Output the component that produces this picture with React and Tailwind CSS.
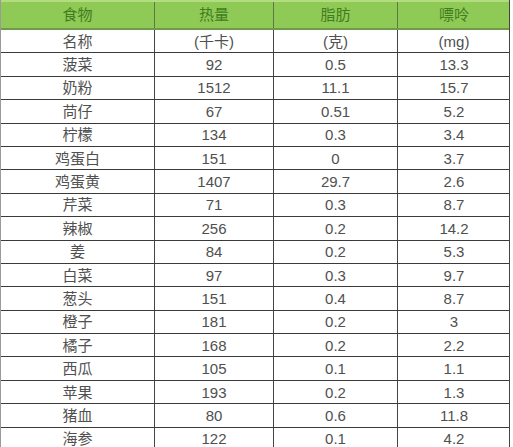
import React from 'react';

const rows = [
    ['名称', '(千卡)', '(克)', '(mg)'],
    ['菠菜', '92', '0.5', '13.3'],
    ['奶粉', '1512', '11.1', '15.7'],
    ['苘仔', '67', '0.51', '5.2'],
    ['柠檬', '134', '0.3', '3.4'],
    ['鸡蛋白', '151', '0', '3.7'],
    ['鸡蛋黄', '1407', '29.7', '2.6'],
    ['芹菜', '71', '0.3', '8.7'],
    ['辣椒', '256', '0.2', '14.2'],
    ['姜', '84', '0.2', '5.3'],
    ['白菜', '97', '0.3', '9.7'],
    ['葱头', '151', '0.4', '8.7'],
    ['橙子', '181', '0.2', '3'],
    ['橘子', '168', '0.2', '2.2'],
    ['西瓜', '105', '0.1', '1.1'],
    ['苹果', '193', '0.2', '1.3'],
    ['猪血', '80', '0.6', '11.8'],
    ['海参', '122', '0.1', '4.2'],
];

const cols = 'grid grid-cols-[154px_119px_124px_112px]';

const App = () => {
    return (
        <div
            className="w-[513px] h-[447px] overflow-hidden bg-white"
            style={{ fontFamily: '"Liberation Sans", "Noto Sans CJK SC", sans-serif' }}
        >
            <div className="w-[510px] border-l border-l-[#9a9a9a] border-r border-r-[#444]">
                <div className={`${cols} h-[30px] bg-[#8fc956] border-t-2 border-t-[#b2dc7f] border-b-2 border-b-[#6f9a4a] text-[#3f7d1f] text-[15px]`}>
                    <div className="flex items-center justify-center border-r border-[#5c7a44]">食物</div>
                    <div className="flex items-center justify-center border-r border-[#5c7a44]">热量</div>
                    <div className="flex items-center justify-center border-r border-[#5c7a44]">脂肪</div>
                    <div className="flex items-center justify-center">嘌呤</div>
                </div>
                {rows.map((r, i) => (
                    <div key={i} className={`${cols} h-[23.4px] border-b border-[#3a3a3a] text-[#505050] text-[15px] leading-none`}>
                        <div className="flex items-center justify-center border-r border-[#444]">{r[0]}</div>
                        <div className="flex items-center justify-center border-r border-[#444]">{r[1]}</div>
                        <div className="flex items-center justify-center border-r border-[#444]">{r[2]}</div>
                        <div className="flex items-center justify-center">{r[3]}</div>
                    </div>
                ))}
            </div>
        </div>
    );
};

export default App;
